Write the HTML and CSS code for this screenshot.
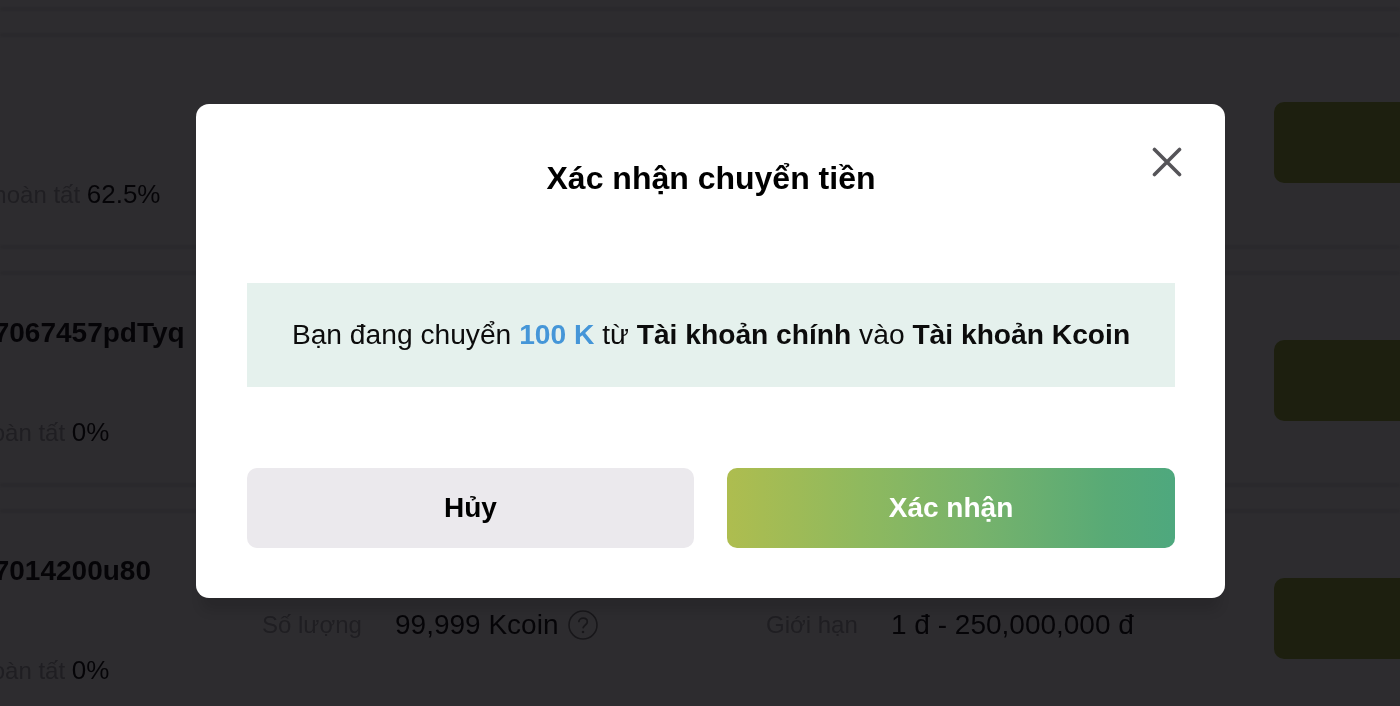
FILE: index.html
```html
<!DOCTYPE html>
<html lang="vi">
<head>
  <meta charset="utf-8" />
  <title>Xác nhận chuyển tiền</title>
  <meta name="viewport" content="width=device-width, initial-scale=1.0" />
  <link rel="stylesheet" href="styles.css">
</head>

<body>
  <div class="list">
    <div class="band"></div>
    <div class="row">
      <div class="order">
        <div class="order-id"></div>
        <div class="done">Đã hoàn tất <span class="done-value">62.5%</span></div>
      </div>
      <div class="buy"></div>
    </div>

    <div class="band"></div>
    <div class="row">
      <div class="order">
        <div class="order-id">2507067457pdTyq</div>
        <div class="done done-short">Đã hoàn tất <span class="done-value">0%</span></div>
      </div>
      <div class="buy"></div>
    </div>

    <div class="band"></div>
    <div class="row">
      <div class="order">
        <div class="order-id">2507014200u80</div>
        <div class="done done-short">Đã hoàn tất <span class="done-value">0%</span></div>
      </div>
      <div class="detail detail-amount">
        <span class="detail-label">Số lượng</span>
        <span class="detail-value">99,999 Kcoin</span>
        <svg class="help" viewBox="0 0 30 30" width="30" height="30">
          <circle cx="15" cy="15" r="14" fill="none" stroke="#000" stroke-width="1.6" />
          <path d="M10.8 12.2c0-2.4 1.9-4 4.3-4s4.2 1.5 4.2 3.7c0 3-3.9 3-4.3 6.4" fill="none" stroke="#000" stroke-width="1.8" />
          <circle cx="15" cy="22" r="1.3" fill="#000" />
        </svg>
      </div>
      <div class="detail detail-limit">
        <span class="detail-label">Giới hạn</span>
        <span class="detail-value">1 đ - 250,000,000 đ</span>
      </div>
      <div class="buy"></div>
    </div>
  </div>

  <div class="overlay">
    <div class="modal">
      <button class="close" type="button" aria-label="Đóng">
        <svg viewBox="0 0 30 30" width="30" height="30">
          <path d="M2.5 2.5L27.5 27.5M27.5 2.5L2.5 27.5" fill="none" stroke="#555458" stroke-width="3.6" stroke-linecap="round" />
        </svg>
      </button>
      <h2 class="modal-title">Xác nhận chuyển tiền</h2>
      <p class="notice">Bạn đang chuyển <b class="amount">100 K</b> từ <b>Tài khoản chính</b> vào <b>Tài khoản Kcoin</b></p>
      <div class="actions">
        <button class="btn btn-cancel" type="button">Hủy</button>
        <button class="btn btn-ok" type="button">Xác nhận</button>
      </div>
    </div>
  </div>
</body>
</html>
```

FILE: styles.css
```css
html, body {
  margin: 0;
  padding: 0;
  height: 100%;
  overflow: hidden;
  background-color: #fff;
  font-family: "Liberation Sans", Arial, sans-serif;
}

/* page behind the dialog */
.list {
  display: flex;
  flex-direction: column;
  padding-top: 7px;
  filter: blur(0.5px);
}

.band {
  box-sizing: border-box;
  height: 30px;
  flex-shrink: 0;
  border-top: 4px solid #e4e4e6;
  border-bottom: 4px solid #e4e4e6;
  filter: blur(1.5px);
}

.row {
  display: flex;
  align-items: flex-start;
  height: 208px;
  flex-shrink: 0;
}

.order {
  width: 260px;
  flex-shrink: 0;
  margin-left: -53px;
  padding-top: 43px;
  white-space: nowrap;
}

.order-id {
  height: 30px;
  font-size: 28px;
  line-height: 30px;
  font-weight: 700;
  color: #111;
}

.done {
  margin-top: 69px;
  margin-left: 9px;
  font-size: 24px;
  line-height: 30px;
  color: #a9a9ad;
}

.done-short {
  margin-left: -6px;
}

.done-value {
  font-size: 26px;
  color: #111;
}

.detail {
  display: flex;
  align-items: center;
  height: 30px;
  margin-top: 97px;
  white-space: nowrap;
}

.detail-amount {
  width: 504px;
  margin-left: 55px;
  flex-shrink: 0;
}

.detail-label {
  width: 133px;
  font-size: 24px;
  color: #a9a9ad;
}

.detail-limit .detail-label {
  width: 125px;
}

.detail-value {
  font-size: 28px;
  color: #111;
}

.help {
  margin-left: 10px;
  opacity: 0.5;
}

.buy {
  flex-shrink: 0;
  width: 200px;
  height: 81px;
  margin-top: 65px;
  margin-left: auto;
  margin-right: -74px;
  border-radius: 10px;
  background-color: #9cb23c;
}

/* dialog */
.overlay {
  position: fixed;
  top: 0;
  left: 0;
  right: 0;
  bottom: 0;
  background-color: rgba(4, 2, 6, 0.835);
}

.modal {
  position: absolute;
  top: 104px;
  left: 196px;
  box-sizing: border-box;
  width: 1029px;
  height: 494px;
  padding: 0 50px 0 51px;
  background-color: #fff;
  border-radius: 13px;
  box-shadow: 0 18px 12px -6px rgba(0, 0, 0, 0.12);
}

.close {
  position: absolute;
  top: 43px;
  right: 43px;
  width: 30px;
  height: 30px;
  padding: 0;
  border: none;
  background: none;
}

.modal-title {
  margin: 0;
  padding-top: 55px;
  font-size: 32px;
  line-height: 38px;
  font-weight: 700;
  text-align: center;
  color: #000;
}

.notice {
  margin: 86px 0 0;
  height: 104px;
  background-color: #e5f1ed;
  font-size: 28.2px;
  line-height: 102px;
  text-align: center;
  color: #0c0c0c;
}

.amount {
  color: #4596d8;
}

.actions {
  display: flex;
  gap: 33px;
  margin-top: 81px;
}

.btn {
  height: 80px;
  border: none;
  border-radius: 10px;
  font-family: "Liberation Sans", Arial, sans-serif;
  font-size: 28px;
  font-weight: 700;
}

.btn-cancel {
  width: 447px;
  background-color: #ebe9ed;
  color: #000;
}

.btn-ok {
  flex: 1;
  background: linear-gradient(90deg, #aebd4f 0%, #8fb95e 30%, #78b36b 55%, #58aa76 85%, #4ea87e 100%);
  color: #fff;
}
```
